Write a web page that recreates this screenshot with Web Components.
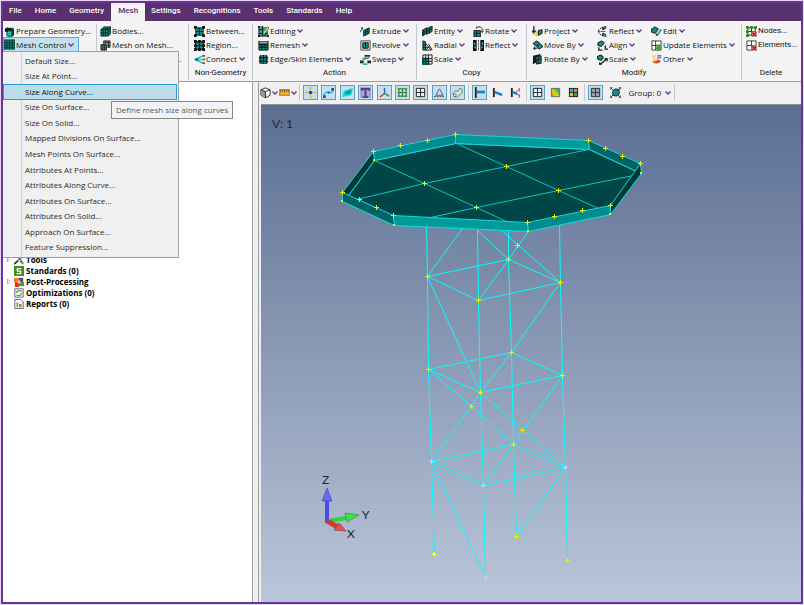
<!DOCTYPE html>
<html lang="en">
<head>
<meta charset="utf-8">
<title>Mesh</title>
<style>
  body {
    margin: 0;
    min-height: 100vh;
    font: 8px/14px "Open Sans", "Noto Sans", sans-serif;
    color: #111;
  }
</style>
</head>
<body>
<fem-app></fem-app>

<script>
const TEAL = "#0d8f88";

// small 12x12 drawings, by name
const ICONS = {
  prepare: `<path d="M3 4h7v6l-2 2H4L2 10z" fill="${TEAL}"/><path d="M4 2h6l1 2v6l-3 2V6L4 5z" fill="#063c3a"/><path d="M1 6V3l3-2v2h3v2H4v2z" fill="#111"/><path d="M4 7h4M4 9h4" stroke="#4fd6cd"/>`,
  mesh: `<path d="M0 1h12v10H0z" fill="${TEAL}"/><path d="M0 1h12v10H0zM3 1v10M6 1v10M9 1v10M0 4h12M0 6.500h12M0 9h12" fill="none" stroke="#053532"/>`,
  bodies: `<path d="M1 4l3-3h8v7l-3 3H1z" fill="${TEAL}"/><path d="M1 4h8v7H1zM9 4l3-3M1 4l3-3h8v7l-3 3M3.500 4v7M6 4v7M1 7.500h8l3-3M4 3h7" fill="none" stroke="#07211f"/>`,
  onmesh: `<path d="M1 5h6v6H1z" fill="${TEAL}"/><path d="M4 1h7v7H8V4H4z" fill="#aaa"/><path d="M1 5h6v6H1zM3 5v6M5 5v6M4 4V1h7v7H8M6 1v3M9 1v7M4 3h7M8 6h3" fill="none" stroke="#222"/>`,
  between: `<path d="M2 2h8v8H2z" fill="${TEAL}"/><path d="M2 1v10M6 2v8M10 1v10M1 2h10M2 6h8M1 10h10" stroke="#111"/><path d="M0 0h3v3H0zM9 0h3v3H9zM0 9h3v3H0zM9 9h3v3H9z" fill="#111"/>`,
  region: `<path d="M1 1h10v10H1z" fill="${TEAL}"/><path d="M2 0v12M6 0v12M10 0v12M0 2h12M0 6h12M0 10h12" stroke="#111"/><path d="M0 0h3v3H0zM4.500 0h3v3h-3zM9 0h3v3H9zM0 4.500h3v3H0zM9 4.500h3v3H9zM0 9h3v3H0zM4.500 9h3v3h-3zM9 9h3v3H9z" fill="#111"/>`,
  connect: `<path d="M1 6l9-4M1 6h10M1 6l9 4" stroke="#26c6bf" stroke-width="1.500"/><path d="M0 6l4-2v4z" fill="#0b6b66"/><path d="M9 1h3v2H9zM10 5h2v2h-2zM9 9h3v2H9z" fill="#666"/>`,
  editing: `<path d="M1 1h10v10H1z" fill="#3aa99f"/><path d="M1 1v10h10M3 1h3M1 4h5M1 8h10M5 1v10M8 6v5" fill="none" stroke="#111"/><path d="M5 8l5-7 2 1-5 7z" fill="#d9e8a0" stroke="#333" stroke-width=".6"/><path d="M0 0h2v2H0zM10 10h2v2h-2zM0 10h2v2H0z" fill="#111"/>`,
  remesh: `<path d="M1 3h10v8H1z" fill="${TEAL}"/><path d="M1 1v10h10V1M1 2h10M1 5h10M4 5v6M8 5v6M4 8l4-3M1 8h10" fill="none" stroke="#111"/>`,
  edgeskin: `<rect x="1" y="1" width="10" height="10" rx="3" fill="#666"/><path d="M3 2h6v8H3z" fill="${TEAL}"/><path d="M3 1v10M6 1v10M9 1v10M1 4h10M1 8h10" stroke="#111"/>`,
  extrude: `<path d="M4 5l6-3v6l-6 3z" fill="${TEAL}" stroke="#111"/><path d="M6 4v6M8 3v6M4 8l6-3" stroke="#111" stroke-width=".7"/><path d="M0 7l3-5M1 2h2v2" fill="none" stroke="#333"/>`,
  revolve: `<path d="M1 1h10v10H1z" fill="#fff" stroke="#333"/><path d="M3 3h6v6H3z" fill="${TEAL}" stroke="#111"/><path d="M6 3v6" stroke="#111"/>`,
  sweep: `<path d="M5 1h6v2H5zM0 7h4v3H0zM8 7h4v3H8z" fill="#12322f"/><path d="M2 5l4-2 2 2-4 2zM3 10h5v2H3z" fill="#27b5a7"/><path d="M7 5l3-1" stroke="#111"/>`,
  entity: `<path d="M0 5l5-3v6l-5 3zM5 3l6-3v6L5 9z" fill="${TEAL}" stroke="#111"/><path d="M2 4v6M8 2v6M0 8l11-5" stroke="#111"/>`,
  radial: `<path d="M1 1l3 1v9H1z" fill="${TEAL}" stroke="#111"/><path d="M4 4l6 7H4z" fill="#fff" stroke="#111"/><path d="M1 5h3M1 8h7M7 8l-3 3M7 4l4 7" stroke="#111"/>`,
  scale: `<path d="M0 4h8v8H0z" fill="${TEAL}"/><path d="M1 1h10v10H1zM1 5h10M4 1v10M7 1v10M1 8h10" fill="none" stroke="#111"/>`,
  rotate: `<path d="M1 5h7v7H1z" fill="${TEAL}" stroke="#111"/><path d="M4 5v7M1 8h7" stroke="#111"/><path d="M4 3V1h4l2 2v4M8 5l2 2 2-2" fill="none" stroke="#222"/>`,
  reflect: `<path d="M0 0h4v12H0zM8 0h4v12H8z" fill="#111"/><path d="M1 2l2 2-2 2zM3 6v4L1 8zM11 2L9 4l2 2zM9 6v4l2-2z" fill="#25b3a8"/><path d="M6 0v12" stroke="#333" stroke-dasharray="2 1"/>`,
  project: `<path d="M2 0v8M0 5l2 3 2-3" fill="none" stroke="#223" stroke-width="1.500"/><path d="M1 8l6-3 4 3-5 4z" fill="#d5dc4a"/><path d="M7 5l4-1v4l-4 2z" fill="${TEAL}" stroke="#111"/>`,
  move: `<path d="M1 4l4-3 3 2-3 4z" fill="${TEAL}" stroke="#111"/><path d="M5 7l4-3 3 3-4 3z" fill="${TEAL}" stroke="#111"/><path d="M3 7v4M1 9h5" stroke="#111"/>`,
  rotateby: `<path d="M1 2l8-2v8l-8 3z" fill="#123"/><path d="M4 3l6-1v8l-5 1z" fill="${TEAL}" stroke="#111"/><path d="M7 3v8M4 7l6-2M1 11l3-4" stroke="#111"/>`,
  mirror: `<path d="M5 1l5-1v3L6 5zM5 11l5 1V9L6 7z" fill="#333"/><path d="M6 2l3-1v2zM6 10l3 1V9z" fill="#25b3a8"/><path d="M5 2L2 4v4l3 2M1 6h9" fill="none" stroke="#222" stroke-dasharray="2 1"/>`,
  align: `<path d="M1 3l4-2 3 2-3 4-4-1z" fill="${TEAL}" stroke="#111"/><path d="M2 8v3h4M8 10h4M9 6v3" fill="none" stroke="#222" stroke-width="1.500"/>`,
  resize: `<path d="M0 3l4-2 3 2-2 4-4-1z" fill="${TEAL}" stroke="#111"/><path d="M4 11l6-5M8 5h3v3M3 9v3h2" fill="none" stroke="#222" stroke-width="1.500"/>`,
  edit: `<path d="M0 4l4-3 4 2-3 5-4-1z" fill="${TEAL}" stroke="#111"/><path d="M6 10l4-7 2 1-4 6z" fill="#2aa79a"/><path d="M5 11l1-3 2 2z" fill="#333"/>`,
  update: `<path d="M1 1h10v10H1zM5 1v10M1 6h10" fill="#fff" stroke="#333"/><path d="M6 5h4v3h2l-4 4-4-4h2z" fill="#4b9c2e"/>`,
  other: `<path d="M1 1h4v3H1z" fill="#e8d85a"/><path d="M7 1h4v4H7z" fill="#7a5fb0"/><path d="M2 5h6v3H2z" fill="#f2d36a"/><path d="M1 8q4 5 10 0l-3-2q-3 3-7 2z" fill="#e0402e"/><path d="M8 2l2 2M2 2h2" stroke="#fff"/>`,
  nodes: `<path d="M2 1v10M6 1v10M10 1v6M1 2h10M1 6h10M1 10h6" stroke="#222"/><path d="M0 0h3v3H0zM4.500 0h3v3h-3zM9 0h3v3H9zM0 4.500h3v3H0zM0 9h3v3H0z" fill="#2f8a2f"/><path d="M6 6h6v6H6z" fill="#d9a0a0"/><path d="M7 7l4 4M11 7l-4 4" stroke="#b01818" stroke-width="1.500"/>`,
  elements: `<path d="M1 1h10v10H1zM6 1v10M1 6h10" fill="#fff" stroke="#333"/><path d="M6 6h6v6H6z" fill="#d9a0a0"/><path d="M7 7l4 4M11 7l-4 4" stroke="#b01818" stroke-width="1.500"/>`,

  cube: `<path d="M1 3l5-2 5 2v6l-5 3-5-3z" fill="#fff" stroke="#222"/><path d="M1 3l5 2v7l-5-3z" fill="#999"/><path d="M1 3l5 2 5-2M6 5v7" fill="none" stroke="#222"/>`,
  ruler: `<path d="M0 3h12v6H0z" fill="#f0b429" stroke="#a87410"/><path d="M2 3v3M4 3v2M6 3v3M8 3v2M10 3v3" stroke="#6b4a08"/>`,
  point: `<path d="M6 0v3M6 9v3M0 6h3M9 6h3" stroke="#e8c400" stroke-width="2"/><circle cx="6" cy="6" r="2" fill="#2b3a9a"/>`,
  curve: `<path d="M1 10C2 4 5 6 6 6s4 2 5-4" fill="none" stroke="#18c8d8" stroke-width="1.500"/><path d="M0 9h3v3H0zM9 1h3v3H9zM5 5h2v2H5z" fill="#2b4a9a"/>`,
  surface: `<path d="M0 11l2-7 10-3-2 8z" fill="#10d8d8"/><path d="M3 8l1-3 6-2-1 5z" fill="#08a0a8"/>`,
  text: `<path d="M0 0h12v12H0z" fill="#a9a3cf"/><path d="M1 1h10v3H9V3H7v7h2v2H3v-2h2V3H3v1H1z" fill="#4b3c8c"/>`,
  axes: `<path d="M6 7V1" stroke="#1d62c8" stroke-width="1.500"/><path d="M6 7l-5 4" stroke="#d03020" stroke-width="1.500"/><path d="M6 7l5 3" stroke="#2f9e2f" stroke-width="1.500"/>`,
  nodegrid: `<path d="M1 2h10M1 6h10M1 10h10M2 1v10M6 1v10M10 1v10" stroke="#1a5c1a"/><path d="M1 1h2v2H1zM5 1h2v2H5zM9 1h2v2H9zM1 5h2v2H1zM5 5h2v2H5zM9 5h2v2H9zM1 9h2v2H1zM5 9h2v2H5zM9 9h2v2H9z" fill="#39a339"/>`,
  quad: `<path d="M1.500 1.500h9v9h-9zM6 1v10M1 6h10" fill="#e8f3f9" stroke="#222"/>`,
  load: `<path d="M6 2l4 7H2z" fill="none" stroke="#5a4a98"/><path d="M0 10.500h12" stroke="#333" stroke-dasharray="2 1"/>`,
  link: `<path d="M1 7l3-3 2 1 3-4 2 2v3l-5 5H3z" fill="#d8e8d8" stroke="#4e7d50"/><circle cx="3" cy="9" r="1.500" fill="#fff" stroke="#555"/>`,
  beam: `<path d="M2 0v12" stroke="#222" stroke-width="2"/><path d="M3 4h9v3H3z" fill="#1d83d0"/>`,
  beamtilt: `<path d="M2 1v10" stroke="#222" stroke-width="2"/><path d="M3 4l8 3v3L3 7z" fill="#1d83d0"/>`,
  beamoff: `<path d="M2 1v10" stroke="#222" stroke-width="2"/><path d="M3 4l5 2v3L3 7z" fill="#1d83d0"/><path d="M7 5l4-3M7 7l4 3M10 1v4M10 8v4" stroke="#d83838"/>`,
  contour: `<defs><linearGradient id="g" x1="0" y1="1" x2="1" y2="0"><stop offset="0" stop-color="#e85a20"/><stop offset=".4" stop-color="#e8d820"/><stop offset=".7" stop-color="#58c040"/><stop offset="1" stop-color="#1890d0"/></linearGradient></defs><path d="M1.500 1.500h9v9h-9z" fill="url(#g)" stroke="#666"/>`,
  criteria: `<path d="M1 1h10v10H1z" fill="#222"/><path d="M2 2h3.500v3.500H2z" fill="#18b8e8"/><path d="M6.500 2H10v3.500H6.500z" fill="#f08020"/><path d="M2 6.500h3.500V10H2z" fill="#f0c020"/><path d="M6.500 6.500H10V10H6.500z" fill="#20a898"/>`,
  shade: `<path d="M1 1h10v10H1z" fill="#9a9fa4"/><path d="M1.500 1.500h9v9h-9zM6 1v10M1 6h10" fill="none" stroke="#333"/>`,
  group: `<path d="M3 4l3-2 4 1v5l-3 2-4-1z" fill="${TEAL}" stroke="#222"/><path d="M0 3V0h3M9 0h3v3M0 9v3h3M9 12h3V9M1 1l2 2M11 1L9 3M1 11l2-2M11 11L9 9" fill="none" stroke="#222"/>`,

  tools: `<path d="M1 10l8-8M1 1l4 1 6 8" fill="none" stroke="#6b4a9a" stroke-width="1.500"/><path d="M0 11l5-4M6 3h5" stroke="#3a3a3a" stroke-width="2"/><path d="M7 7l4 4" stroke="#5fa83a" stroke-width="2"/>`,
  standards: `<path d="M0 0h12v12H0z" fill="#3f8f1f"/><path d="M9 3H4v3h4v3H3" fill="none" stroke="#fff" stroke-width="1.500"/>`,
  post: `<path d="M0 1h6v5H0z" fill="#f08020"/><path d="M6 1h5v5H6z" fill="#6b3a9a"/><path d="M1 6h5v6H1z" fill="#d83a2a"/><path d="M6 6h6v5H6z" fill="#3fa03a"/><circle cx="6" cy="6" r="2" fill="#f3c9a0"/>`,
  optimize: `<path d="M1 1h10v10H1z" fill="#fff" stroke="#5b3a7a"/><path d="M3 6q0-3 3-3t3 2M9 6q0 3-3 3T3 8" fill="none" stroke="#5fa83a" stroke-width="1.500"/>`,
  reports: `<path d="M1 .5h7l3 3v8H1z" fill="#fff" stroke="#5b3a7a"/><path d="M3 4h2v6H3zM6 6h3v4H6z" fill="#5fa83a"/>`,
};

class FemIcon extends HTMLElement {
  connectedCallback() {
    this.attachShadow({ mode: "open" }).innerHTML = /* html */`
    <style>
      :host { display: block; flex: none; width: 11px; height: 11px; }
      svg { display: block; width: 100%; height: 100%; }
    </style>
    <svg viewBox="0 0 12 12" fill="none" aria-hidden="true">${ICONS[this.getAttribute("name")] ?? ""}</svg>`;
  }
}

class FemChevron extends HTMLElement {
  connectedCallback() {
    this.attachShadow({ mode: "open" }).innerHTML = /* html */`
    <style>
      :host { display: block; flex: none; width: 6px; height: 4px; }
      svg { display: block; }
    </style>
    <svg width="6" height="4" viewBox="0 0 6 4" aria-hidden="true"><path d="M0.500 0.500L3 3L5.500 0.500" fill="none" stroke="#5f3888" stroke-width="1.300"/></svg>`;
  }
}

class MenuBar extends HTMLElement {
  connectedCallback() {
    const tabs = this.getAttribute("tabs").split(",");
    const active = this.getAttribute("active");
    this.attachShadow({ mode: "open" }).innerHTML = /* html */`
    <style>
      :host { display: flex; height: 18px; background: #5a316f; }
      button {
        border: 0;
        margin: 0;
        padding: 0 7px 2px 6px;
        background: none;
        color: #fff;
        font: 500 8px/14px Roboto, sans-serif;
      }
      button:first-child { padding-left: 4px; }
      .active { padding: 0 7px 2px; background: #f4f4f5; color: #5a316f; }
    </style>
    ${tabs.map((t) => `<button class="${t === active ? "active" : ""}">${t}</button>`).join("")}`;
  }
}

class RibbonGroup extends HTMLElement {
  connectedCallback() {
    this.attachShadow({ mode: "open" }).innerHTML = /* html */`
    <style>
      :host {
        display: flex;
        flex-direction: column;
        box-sizing: border-box;
        margin: 3px 0 1px;
        padding-left: var(--pad, 5px);
        border-right: 1px solid #c3c8cf;
      }
      :host([last]) { border-right: 0; }
      .columns { display: grid; grid-template-columns: var(--cols, 1fr); height: 42px; }
      .label { font: 8px/14px Roboto, sans-serif; text-align: center; margin-right: 5px; }
    </style>
    <div class="columns"><slot></slot></div>
    <div class="label">${this.getAttribute("label") ?? ""}</div>`;
  }
}

class RibbonColumn extends HTMLElement {
  connectedCallback() {
    this.attachShadow({ mode: "open" }).innerHTML = /* html */`
    <style>
      :host { display: flex; flex-direction: column; align-items: flex-start; }
    </style>
    <slot></slot>`;
  }
}

class RibbonButton extends HTMLElement {
  connectedCallback() {
    const icon = this.getAttribute("icon");
    this.attachShadow({ mode: "open" }).innerHTML = /* html */`
    <style>
      :host { display: block; height: 14px; }
      :host([end]) { align-self: flex-end; margin-right: 7px; }
      button {
        display: flex;
        align-items: center;
        gap: 1px;
        height: 14px;
        padding: 0;
        border: 0;
        background: none;
        color: inherit;
        font: inherit;
        white-space: nowrap;
      }
      fem-chevron { margin-left: 1px; }
      :host([open]) button { height: 13px; padding-right: 4px; background: #c3e0ee; box-shadow: 0 0 0 1px #4db1e0; }
    </style>
    <button>
      ${icon ? `<fem-icon name="${icon}"></fem-icon>` : ""}
      <slot></slot>
      ${this.hasAttribute("menu") ? "<fem-chevron></fem-chevron>" : ""}
    </button>`;
  }
}

class DropMenu extends HTMLElement {
  connectedCallback() {
    const items = this.getAttribute("items").split(",");
    const active = this.getAttribute("active");
    this.attachShadow({ mode: "open" }).innerHTML = /* html */`
    <style>
      :host {
        display: block;
        box-sizing: border-box;
        height: 207px;
        border: 1px solid #a0a0a0;
        border-left: 0;
        padding: 1px 1px 2px 0;
        background: linear-gradient(90deg, transparent 18px, #d4d4d4 18px 19px, transparent 19px) #f0f0f0;
      }
      ul {
        display: grid;
        grid-auto-rows: 1fr;
        height: 100%;
        margin: 0;
        padding: 0;
        list-style: none;
      }
      li { display: grid; min-height: 0; }
      button {
        border: 1px solid transparent;
        min-height: 0;
        padding: 0 0 0 21px;
        background: none;
        color: #2a2a2a;
        font: inherit;
        line-height: 12px;
        text-align: left;
      }
      .active { border-color: #26a0da; background: #bddcea; color: #111; }
    </style>
    <ul>${items.map((t) => `<li><button class="${t === active ? "active" : ""}">${t}</button></li>`).join("")}</ul>`;
  }
}

class ToolTip extends HTMLElement {
  connectedCallback() {
    this.attachShadow({ mode: "open" }).innerHTML = /* html */`
    <style>
      :host {
        display: block;
        padding: 1px 4px;
        border: 1px solid #868686;
        background: #f2f3f8;
        color: #575757;
        white-space: nowrap;
      }
    </style>
    <slot></slot>`;
  }
}

class TreeItem extends HTMLElement {
  connectedCallback() {
    this.attachShadow({ mode: "open" }).innerHTML = /* html */`
    <style>
      :host { display: flex; align-items: center; gap: 2px; height: 11px; font-weight: 700; line-height: 11px; color: #000; }
      .arrow { width: 9px; height: 7px; }
      fem-icon { width: 10px; height: 10px; }
    </style>
    <svg class="arrow" viewBox="0 0 9 7" aria-hidden="true">${this.hasAttribute("branch") ? '<path d="M4.500 1L7 3.500L4.500 6z" fill="#fff" stroke="#a0a0a0" stroke-width=".8"/>' : ""}</svg>
    <fem-icon name="${this.getAttribute("icon")}"></fem-icon>
    <span><slot></slot></span>`;
  }
}

class ViewTools extends HTMLElement {
  connectedCallback() {
    const on = (n) => `<button class="on" aria-label="${n}"><fem-icon name="${n}"></fem-icon></button>`;
    const off = (n) => `<button aria-label="${n}"><fem-icon name="${n}"></fem-icon></button>`;
    const combo = (n) => `<button class="combo" aria-label="${n}"><fem-icon name="${n}"></fem-icon><fem-chevron></fem-chevron></button>`;
    this.attachShadow({ mode: "open" }).innerHTML = /* html */`
    <style>
      :host { display: flex; align-items: center; height: 21px; padding-bottom: 1px; background: #f0f0f0; }
      .set {
        display: flex;
        align-items: center;
        justify-content: space-between;
        box-sizing: border-box;
        height: 17px;
        padding: 0 3px;
        border-right: 1px solid #c5c9ce;
      }
      .views { width: 41px; padding: 0 2px 0 0; }
      .draw { width: 169px; }
      .beams { width: 58px; }
      .style { width: 58px; }
      .groups { width: 90px; padding-right: 2px; }
      button {
        display: flex;
        align-items: center;
        justify-content: center;
        box-sizing: border-box;
        width: 15px;
        height: 15px;
        padding: 0;
        border: 1px solid transparent;
        background: none;
        color: inherit;
        font: inherit;
      }
      .on { border-color: #5f9fc4; background: #c5e0ee; }
      .combo { width: 19px; gap: 1px; }
      .wide { width: auto; gap: 4px; white-space: nowrap; }
    </style>
    <div class="set views">${combo("cube")}${combo("ruler")}</div>
    <div class="set draw">${["point", "curve", "surface", "text", "axes", "nodegrid", "quad", "load", "link"].map(on).join("")}</div>
    <div class="set beams">${on("beam")}${off("beamtilt")}${off("beamoff")}</div>
    <div class="set style">${on("quad")}${off("contour")}${off("criteria")}</div>
    <div class="set groups">${on("shade")}${off("group")}<button class="wide">Group: 0 <fem-chevron></fem-chevron></button></div>`;
  }
}

// tank platform on a braced four leg tower, in view coordinates
const LEGS = [
  [[426, 225], [427, 276], [428, 369], [431, 461], [434, 554]],
  [[477, 228], [478, 300], [480, 392], [483, 485], [485, 577]],
  [[508, 229], [508, 259], [511, 352], [513, 444], [516, 536]],
  [[559, 224], [560, 282], [562, 375], [565, 467], [567, 560]],
];

const BRACES = [
  [[427, 276], [462, 228]], [[508, 259], [475, 228]], [[560, 282], [500, 229]],
  [[530, 228], [508, 259], [478, 300]], [[427, 276], [480, 392]], [[560, 282], [511, 352]],
  [[511, 352], [480, 392], [431, 461]], [[428, 369], [471, 406], [513, 444]],
  [[480, 392], [565, 467]], [[562, 375], [513, 444], [483, 485]],
  [[431, 461], [485, 577]], [[565, 467], [516, 536]],
];

const FLOOR = [
  [[374, 160], [424, 183], [476, 207], [506, 221]],
  [[456, 143], [506, 166], [558, 190], [598, 208]],
  [[356, 199], [424, 183], [506, 166], [588, 149]],
  [[430, 217], [476, 207], [558, 190], [633, 175]],
  [[348, 195], [374, 160]], [[589, 149], [636, 171]],
];

const MARKS = [
  [373, 151], [400, 145], [427, 140], [455, 134], [588, 140], [605, 148], [622, 156], [640, 163],
  [610, 205], [582, 210], [554, 216], [527, 222], [393, 215], [376, 207], [359, 199], [342, 192],
  [424, 183], [506, 166], [476, 207], [558, 190], [517, 245], [471, 406], [522, 430],
];

class ModelView extends HTMLElement {
  static line(points) {
    return `<polyline points="${points.map((p) => p.join()).join(" ")}"/>`;
  }

  static cross([x, y]) {
    return `M${x - 2} ${y + 0.5}h5M${x + 0.5} ${y - 2}v5`;
  }

  connectedCallback() {
    const levels = [1, 2, 3].map((i) => [0, 1, 3, 2, 0].map((leg) => LEGS[leg][i]));
    const joints = LEGS.flatMap((leg) => leg.slice(1));
    this.attachShadow({ mode: "open" }).innerHTML = /* html */`
    <style>
      :host { display: block; flex: 1; min-height: 0; background: linear-gradient(#5b6e92, #bac6d9); }
      svg { display: block; width: 100%; height: 100%; }
      text { font: 12px Lato, sans-serif; fill: #1c2434; }
    </style>
    <svg viewBox="261 105 540 497" preserveAspectRatio="xMinYMin meet" role="img" aria-label="Model view">
      <g transform="translate(.5 .5)">
        <g fill="none" stroke="#00ffff">
          ${[...LEGS, ...BRACES, ...levels].map(ModelView.line).join("")}
        </g>
        <g stroke="#14d8d8" stroke-linejoin="round">
          <path d="M374 160L455 143L589 149L641 173L610 214L528 231L394 225L342 201z" fill="#004646"/>
          <path d="M373 151L455 134V143L374 160z" fill="#008c8c"/>
          <path d="M455 134L588 140L589 149L455 143z" fill="#009a9a"/>
          <path d="M588 140L640 163L636 171L589 149z" fill="#006262"/>
          <path d="M373 151L342 192L348 195L374 160z" fill="#003838"/>
          <g fill="none" stroke="#0fc4c4">${FLOOR.map(ModelView.line).join("")}</g>
          <path d="M640 163L641 173L610 214V205z" fill="#003838"/>
          <path d="M342 192L393 215L394 225L342 201z" fill="#006262"/>
          <path d="M393 215L527 222L528 231L394 225z" fill="#009a9a"/>
          <path d="M527 222L610 205V214L528 231z" fill="#008c8c"/>
        </g>
      </g>
      <path d="${[...MARKS, ...joints].map(ModelView.cross).join("")}" stroke="#e6f01e"/>
      <path d="M341 200h2v2h-2zM393 224h2v2h-2zM527 230h2v2h-2zM609 213h2v2h-2zM640 172h2v2h-2zM373 159h2v2h-2z" fill="#d8f020"/>
      <path d="M433 553h2v2h-2z" fill="#fff"/>
      <path d="M327 523V500" stroke="#4a4ae8" stroke-width="4"/>
      <path d="M327 488l5 13h-10z" fill="#6a68f4" stroke="#3a3ac0" stroke-width=".6"/>
      <path d="M328 521L346 518" stroke="#2fd43a" stroke-width="4"/>
      <path d="M359 515L345 513L347 522z" fill="#3ee048" stroke="#1f8f28" stroke-width=".6"/>
      <path d="M327 521L338 527" stroke="#d03a3a" stroke-width="5"/>
      <path d="M346 531L339 523L334 530z" fill="#ee5050" stroke="#a02828" stroke-width=".6"/>
      <text x="272" y="128">V: 1</text>
      <text x="322" y="484">Z</text>
      <text x="362" y="519">Y</text>
      <text x="347" y="538">X</text>
    </svg>`;
  }
}

class FemApp extends HTMLElement {
  connectedCallback() {
    this.attachShadow({ mode: "open" }).innerHTML = /* html */`
    <style>
      :host {
        display: flex;
        flex-direction: column;
        box-sizing: border-box;
        height: 100vh;
        padding: 1px;
        background: #e4dcee;
      }
      .frame {
        flex: 1;
        min-height: 0;
        display: flex;
        flex-direction: column;
        border: 2px solid #6c30a0;
        background: #f0f0f0;
      }
      .ribbon {
        position: relative;
        z-index: 1;
        display: grid;
        grid-template-columns: 94px 92px 64px 164px 110px 215px 1fr;
        background: #f4f4f5;
        border-bottom: 1px solid #9a9da3;
      }
      .prepare { --pad: 1px; }
      .bodies { --pad: 3px; }
      .action { --cols: 102px 1fr; }
      .copy { --cols: 51px 1fr; }
      .modify { --cols: 65px 54px 1fr; }
      .delete { --pad: 4px; font-family: Roboto, sans-serif; }
      drop-menu { position: absolute; left: 0; top: 30px; width: 176px; }
      tool-tip { position: absolute; left: 108px; top: 80px; }
      main { flex: 1; min-height: 0; display: grid; grid-template-columns: 250px 1fr; gap: 5px; }
      .tree { padding-top: 172px; background: #fff; border-right: 1px solid #9a9da3; }
      .view { display: flex; flex-direction: column; min-height: 0; border-left: 1px solid #9a9da3; }
      model-view { margin-left: 2px; border-top: 1px solid #8b919c; }
    </style>
    <div class="frame">
      <menu-bar tabs="File,Home,Geometry,Mesh,Settings,Recognitions,Tools,Standards,Help" active="Mesh"></menu-bar>
      <div class="ribbon">
        <ribbon-group class="prepare">
          <ribbon-column>
            <ribbon-button icon="prepare">Prepare Geometry...</ribbon-button>
            <ribbon-button icon="mesh" menu open>Mesh Control</ribbon-button>
          </ribbon-column>
        </ribbon-group>
        <ribbon-group class="bodies">
          <ribbon-column>
            <ribbon-button icon="bodies">Bodies...</ribbon-button>
            <ribbon-button icon="onmesh">Mesh on Mesh...</ribbon-button>
            <ribbon-button end>...</ribbon-button>
          </ribbon-column>
        </ribbon-group>
        <ribbon-group label="Non-Geometry">
          <ribbon-column>
            <ribbon-button icon="between">Between...</ribbon-button>
            <ribbon-button icon="region">Region...</ribbon-button>
            <ribbon-button icon="connect" menu>Connect</ribbon-button>
          </ribbon-column>
        </ribbon-group>
        <ribbon-group class="action" label="Action">
          <ribbon-column>
            <ribbon-button icon="editing" menu>Editing</ribbon-button>
            <ribbon-button icon="remesh" menu>Remesh</ribbon-button>
            <ribbon-button icon="edgeskin" menu>Edge/Skin Elements</ribbon-button>
          </ribbon-column>
          <ribbon-column>
            <ribbon-button icon="extrude" menu>Extrude</ribbon-button>
            <ribbon-button icon="revolve" menu>Revolve</ribbon-button>
            <ribbon-button icon="sweep" menu>Sweep</ribbon-button>
          </ribbon-column>
        </ribbon-group>
        <ribbon-group class="copy" label="Copy">
          <ribbon-column>
            <ribbon-button icon="entity" menu>Entity</ribbon-button>
            <ribbon-button icon="radial" menu>Radial</ribbon-button>
            <ribbon-button icon="scale" menu>Scale</ribbon-button>
          </ribbon-column>
          <ribbon-column>
            <ribbon-button icon="rotate" menu>Rotate</ribbon-button>
            <ribbon-button icon="reflect" menu>Reflect</ribbon-button>
          </ribbon-column>
        </ribbon-group>
        <ribbon-group class="modify" label="Modify">
          <ribbon-column>
            <ribbon-button icon="project" menu>Project</ribbon-button>
            <ribbon-button icon="move" menu>Move By</ribbon-button>
            <ribbon-button icon="rotateby" menu>Rotate By</ribbon-button>
          </ribbon-column>
          <ribbon-column>
            <ribbon-button icon="mirror" menu>Reflect</ribbon-button>
            <ribbon-button icon="align" menu>Align</ribbon-button>
            <ribbon-button icon="resize" menu>Scale</ribbon-button>
          </ribbon-column>
          <ribbon-column>
            <ribbon-button icon="edit" menu>Edit</ribbon-button>
            <ribbon-button icon="update" menu>Update Elements</ribbon-button>
            <ribbon-button icon="other" menu>Other</ribbon-button>
          </ribbon-column>
        </ribbon-group>
        <ribbon-group class="delete" label="Delete" last>
          <ribbon-column>
            <ribbon-button icon="nodes">Nodes...</ribbon-button>
            <ribbon-button icon="elements">Elements...</ribbon-button>
          </ribbon-column>
        </ribbon-group>
        <drop-menu
          items="Default Size...,Size At Point...,Size Along Curve...,Size On Surface...,Size On Solid...,Mapped Divisions On Surface...,Mesh Points On Surface...,Attributes At Points...,Attributes Along Curve...,Attributes On Surface...,Attributes On Solid...,Approach On Surface...,Feature Suppression..."
          active="Size Along Curve..."></drop-menu>
        <tool-tip>Define mesh size along curves</tool-tip>
      </div>
      <main>
        <div class="tree">
          <tree-item icon="tools" branch>Tools</tree-item>
          <tree-item icon="standards">Standards (0)</tree-item>
          <tree-item icon="post" branch>Post-Processing</tree-item>
          <tree-item icon="optimize">Optimizations (0)</tree-item>
          <tree-item icon="reports">Reports (0)</tree-item>
        </div>
        <div class="view">
          <view-tools></view-tools>
          <model-view></model-view>
        </div>
      </main>
    </div>`;
  }
}

customElements.define("fem-icon", FemIcon);
customElements.define("fem-chevron", FemChevron);
customElements.define("menu-bar", MenuBar);
customElements.define("ribbon-group", RibbonGroup);
customElements.define("ribbon-column", RibbonColumn);
customElements.define("ribbon-button", RibbonButton);
customElements.define("drop-menu", DropMenu);
customElements.define("tool-tip", ToolTip);
customElements.define("tree-item", TreeItem);
customElements.define("view-tools", ViewTools);
customElements.define("model-view", ModelView);
customElements.define("fem-app", FemApp);
</script>
</body>
</html>
